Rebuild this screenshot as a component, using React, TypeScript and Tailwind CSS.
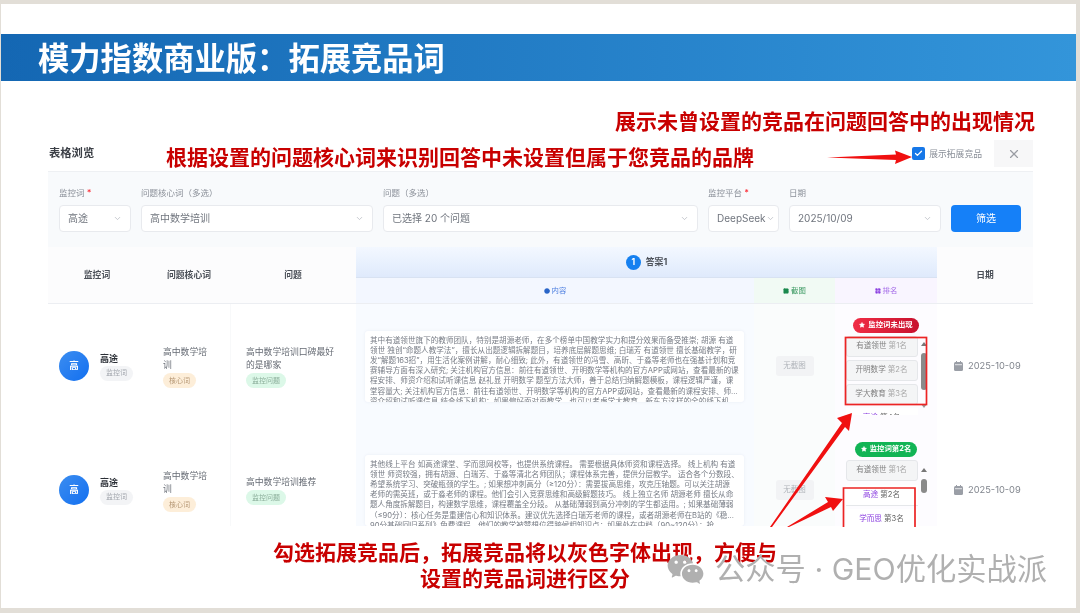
import { ChevronDown, X, Check, Star, CircleDot, Image, LayoutGrid } from "lucide-react";
import { RiWechatFill } from "react-icons/ri";

const box1 = [
  "其中有道领世旗下的教师团队，特别是胡源老师，在多个榜单中国教学实力和提分效果而备受推崇; 胡源 有道",
  "领世 独创“命题人教学法”，擅长从出题逻辑拆解题目，培养底层解题思维; 白瑞芳 有道领世 擅长基础教学，研",
  "发“解题163招”，用生活化案例讲解，耐心细致; 此外，有道领世的冯雪、高昕、于淼等老师也在强基计划和竞",
  "赛辅导方面有深入研究; 关注机构官方信息：前往有道领世、开明数学等机构的官方APP或网站，查看最新的课",
  "程安排、师资介绍和试听课信息 赵礼显 开明数学 题型方法大师，善于总结归纳解题模板，课程逻辑严谨，课",
  "堂容量大; 关注机构官方信息：前往有道领世、开明数学等机构的官方APP或网站，查看最新的课程安排、师...",
  "资介绍和试听课信息 结合线下机构：如果偏好面对面教学，也可以考虑学大教育、新东方这样的全的线下机",
];
const box2 = [
  "其他线上平台 如高途课堂、学而思网校等，也提供系统课程。 需要根据具体师资和课程选择。 线上机构 有道",
  "领世 师资较强，拥有胡源、白瑞芳、于淼等清北名师团队；课程体系完善，提供分层教学。 适合各个分数段、",
  "希望系统学习、突破瓶颈的学生。; 如果想冲刺高分（≥120分）：需要拔高思维，攻克压轴题。可以关注胡源",
  "老师的需英班，或于淼老师的课程。他们会引入竞赛思维和高级解题技巧。 线上独立名师 胡源老师 擅长从命",
  "题人角度拆解题目，构建数学思维，课程覆盖全分段。 从基础薄弱到高分冲刺的学生都适用。; 如果基础薄弱",
  "（≤90分）：核心任务是重建信心和知识体系。建议优先选择白瑞芳老师的课程，或者胡源老师在B站的《稳...",
  "90分基础回归系列》免费课程，他们的教学被赞想位得跨候相知识点；如果处在中档（90~120分）：抢",
];

function Sel({ w, text, label, req }: { w: string; text: string; label: string; req?: boolean }) {
  return (
    <div className={`flex flex-col gap-[6px] ${w}`}>
      <div className="text-[8.5px] leading-[12px] text-[#8a8f98] whitespace-nowrap">
        {label}
        {req && <span className="text-red-500"> *</span>}
      </div>
      <div className="h-[27px] flex items-center justify-between pl-2 pr-[8px] bg-white border border-[#e8eaee] rounded-[4px] text-[10px] text-[#70757e] whitespace-nowrap overflow-hidden">
        <span>{text}</span>
        <ChevronDown size={9} className="text-[#b5b9c0] shrink-0" />
      </div>
    </div>
  );
}

function Pill({ children, cls }: { children: React.ReactNode; cls: string }) {
  return <span className={`inline-flex items-center justify-center h-[15px] w-[33px] rounded-full text-[7px] ${cls}`}>{children}</span>;
}

function RankGrey({ name, rank }: { name: string; rank: string }) {
  return (
    <div className="h-[21px] shrink-0 flex items-center justify-center gap-[2px] bg-[#f4f5f6] border border-[#e5e7ea] rounded-[3px] text-[7.6px] text-[#808080]">
      <span>{name}</span>
      <span className="text-[#a8a8a8]">{rank}</span>
    </div>
  );
}
function RankWhite({ name, rank }: { name: string; rank: string }) {
  return (
    <div className="h-[21px] shrink-0 flex items-center justify-center gap-[2px] bg-white border-b border-[#e5e7ea] text-[7.6px] text-[#666]">
      <span className="text-[#8b3fe0]">{name}</span>
      <span>{rank}</span>
    </div>
  );
}

function Scroll({ arrowTop, thumbTop, thumbH, down }: { arrowTop: string; thumbTop: string; thumbH: string; down?: boolean }) {
  return (
    <div className="w-[6px] h-full flex flex-col items-center">
      <span className={`${arrowTop} w-0 h-0 border-x-[3px] border-x-transparent border-b-[4px] border-b-[#777]`} />
      <span className={`w-[6px] rounded-[3px] bg-[#8a8a8a] ${thumbTop} ${thumbH}`} />
      {down && <span className="mt-[14px] w-0 h-0 border-x-[3px] border-x-transparent border-t-[4px] border-t-[#999]" />}
    </div>
  );
}

function CalIcon() {
  return (
    <svg width="9" height="10" viewBox="0 0 9 10">
      <rect x="0" y="1" width="9" height="9" rx="1.5" fill="#9a9ea6" />
      <rect x="2" y="0" width="1" height="2" fill="#9a9ea6" />
      <rect x="6" y="0" width="1" height="2" fill="#9a9ea6" />
      <rect x="1" y="3.2" width="7" height="1" fill="#e4e5e8" />
    </svg>
  );
}

function Row({
  q,
  lines,
  pill,
  pillCls,
  list,
  scroll,
}: {
  q: string;
  lines: string[];
  pill: string;
  pillCls: string;
  list: React.ReactNode;
  scroll: React.ReactNode;
}) {
  return (
    <div className="grid grid-cols-[102px_80px_126px_398px_81px_102px_96px] h-[124px] shrink-0">
      <div className="flex items-center pl-[11px] gap-[11px]">
        <div className="w-[30px] h-[30px] rounded-full bg-gradient-to-br from-[#3b8df0] to-[#0f6ff0] flex items-center justify-center text-white text-[9.5px] font-bold">高</div>
        <div className="flex flex-col gap-[1px] items-start">
          <span className="text-[9px] leading-[13px] font-bold text-[#2b2f36]">高途</span>
          <Pill cls="bg-[#f3f4f6] text-[#a3a7ae]">监控词</Pill>
        </div>
      </div>
      <div className="flex flex-col justify-center items-start pl-[13px] pr-[15px] text-[8.8px] leading-[13px] text-[#666b74]">
        <div>高中数学培训</div>
        <div className="mt-[2px]"><Pill cls="bg-[#fdeed9] text-[#b89a78]">核心词</Pill></div>
      </div>
      <div className="flex flex-col justify-center items-start pl-[15px] pr-[15px] text-[8.8px] leading-[13px] text-[#666b74] border-l border-[#f8f9fa]">
        <div>{q}</div>
        <div className="mt-[2px]"><Pill cls="bg-[#dcf8e8] w-[40px] text-[#8cae9b]">监控问题</Pill></div>
      </div>
      <div className="bg-[#f8fbff] flex items-center pl-[9px] pr-[10px]">
        <div className="w-full h-[71px] bg-white rounded-[3px] pl-[5px] pr-[5px] pt-[5px] overflow-hidden text-[7.6px] leading-[10.2px] text-[#777c85] shadow-[0_0_3px_rgba(120,140,170,0.12)]">
          {lines.map((l, i) => (
            <div key={i} className="whitespace-nowrap overflow-hidden">{l}</div>
          ))}
        </div>
      </div>
      <div className="bg-[#fafcfc] flex items-center justify-center">
        <span className="w-[38px] h-[20px] bg-[#f2f3f5] rounded-[3px] flex items-center justify-center text-[7.5px] text-[#b0b4ba]">无截图</span>
      </div>
      <div className="bg-[#fdfcff] flex flex-col items-center justify-center gap-[3px]">
        <div className={`h-[15px] px-[6px] rounded-full flex items-center gap-[3px] text-white text-[7.4px] font-bold whitespace-nowrap ${pillCls}`}>
          <Star size={6} fill="white" />
          {pill}
        </div>
        <div className="h-[79px] flex gap-[3px] w-[81px] overflow-hidden">
          <div className="w-[72px] flex flex-col gap-[3px] overflow-hidden">{list}</div>
          {scroll}
        </div>
      </div>
      <div className="flex items-center pl-[17px] gap-[5px] text-[9.3px] text-[#80858d]">
        <CalIcon />
        2025-10-09
      </div>
    </div>
  );
}

export default function App() {
  return (
    <div className="w-[1080px] h-[613px] bg-[#e2ded7] pt-[4px] pb-[5px] pl-[1px] pr-[4px] overflow-hidden font-['Inter','Noto_Sans_CJK_SC',sans-serif]">
      <div className="relative w-full h-full bg-white overflow-hidden blur-[0.5px]">
        <div className="mt-[30px] h-[47px] bg-gradient-to-r from-[#1467b3] to-[#3395da] flex items-center pl-[37px] text-[31.3px] font-bold text-white whitespace-nowrap font-['Noto_Sans_CJK_SC',sans-serif]">
          模力指数商业版：拓展竞品词
        </div>

        <div className="ml-[47px] mt-[55px] w-[985px] h-[390px] overflow-hidden flex flex-col">
          <div className="h-[36px] shrink-0 flex items-start justify-between border-b border-[#eef0f3]">
            <span className="text-[11.3px] font-bold text-[#3b3f46] mt-[9px] ml-[1px]">表格浏览</span>
            <div className="flex items-center mt-[4px]">
              <span className="w-[13px] h-[13px] bg-[#1677e8] rounded-[2px] flex items-center justify-center mr-[4px]">
                <Check size={9} strokeWidth={3.5} className="text-white" />
              </span>
              <span className="text-[8.8px] text-[#8a8f98] mr-[12px]">展示拓展竞品</span>
              <span className="w-[39px] h-[27px] bg-[#f7f7f8] flex items-center justify-center">
                <X size={14} className="text-[#9a9da3]" />
              </span>
            </div>
          </div>

          <div className="h-[75px] shrink-0 bg-[#f8fafc] flex items-start gap-[10px] pl-[11px] pt-[15px]">
            <Sel w="w-[72px]" label="监控词" req text="高途" />
            <Sel w="w-[232px]" label="问题核心词（多选）" text="高中数学培训" />
            <Sel w="w-[315px]" label="问题（多选）" text="已选择 20 个问题" />
            <Sel w="w-[71px]" label="监控平台" req text="DeepSeek" />
            <Sel w="w-[152px]" label="日期" text="2025/10/09" />
            <div className="w-[70px] h-[27px] mt-[18px] bg-[#1580f8] rounded-[4px] flex items-center justify-center text-[10px] text-white">筛选</div>
          </div>

          <div className="grid grid-cols-[102px_80px_126px_398px_81px_102px_96px] grid-rows-[31px_25px] shrink-0 border-b border-[#eceef2] text-[8.8px] font-bold text-[#4b5058]">
            <div className="row-span-2 flex items-center justify-center pr-[4px] bg-[#fcfcfd]">监控词</div>
            <div className="row-span-2 flex items-center justify-center pr-[2px] bg-[#fcfcfd]">问题核心词</div>
            <div className="row-span-2 flex items-center justify-center bg-[#fcfcfd]">问题</div>
            <div className="col-span-3 flex items-center justify-center gap-[5px] bg-gradient-to-b from-[#f3f8ff] to-[#dfeafc] border-b border-[#d8e2f2]">
              <span className="w-[15px] h-[15px] rounded-full bg-[#1580f0] text-white flex items-center justify-center text-[8.5px]">1</span>
              答案1
            </div>
            <div className="row-span-2 flex items-center justify-center bg-[#fcfcfd]">日期</div>
            <div className="bg-[#f3f7ff] flex items-center justify-center gap-[2px] text-[7.4px] font-normal text-[#4d7fe0]">
              <CircleDot size={6} fill="#2a66c8" className="text-[#2a66c8]" />内容
            </div>
            <div className="bg-[#f1faf4] flex items-center justify-center gap-[2px] text-[7.4px] font-normal text-[#3d9a63]">
              <Image size={6} fill="#1c8a4f" className="text-[#1c8a4f]" />截图
            </div>
            <div className="bg-[#f9f5ff] flex items-center justify-center gap-[2px] text-[7.4px] font-normal text-[#a46be8]">
              <LayoutGrid size={6} fill="#8b3fe0" className="text-[#8b3fe0]" />排名
            </div>
          </div>

          <Row
            q="高中数学培训口碑最好的是哪家"
            lines={box1}
            pill="监控词未出现"
            pillCls="bg-gradient-to-r from-[#f02c45] to-[#c8102e]"
            list={
              <>
                <RankGrey name="有道领世" rank="第1名" />
                <RankGrey name="开明数学" rank="第2名" />
                <RankGrey name="学大教育" rank="第3名" />
                <RankWhite name="高途" rank="第4名" />
              </>
            }
            scroll={<Scroll arrowTop="mt-[6px]" thumbTop="mt-[7px]" thumbH="h-[37px]" down />}
          />
          <Row
            q="高中数学培训推荐"
            lines={box2}
            pill="监控词第2名"
            pillCls="bg-[#12b455]"
            list={
              <>
                <RankGrey name="有道领世" rank="第1名" />
                <div className="mt-[1px] flex flex-col gap-[3px]">
                  <RankWhite name="高途" rank="第2名" />
                  <RankWhite name="学而思" rank="第3名" />
                </div>
              </>
            }
            scroll={<Scroll arrowTop="mt-[8px]" thumbTop="mt-[7px]" thumbH="h-[14px]" />}
          />
        </div>

        <svg className="absolute inset-0 w-full h-full pointer-events-none" viewBox="1 4 1075 604">
          <rect x="845.5" y="337.5" width="81" height="67" fill="none" stroke="#ec2424" strokeWidth="1.7" />
          <path d="M843.5 527V488H915V527" fill="none" stroke="#ec2424" strokeWidth="1.7" />
          <polygon points="827,157.6 896,154.5 895,150.5 912,157 895,164 896,160" fill="#f01010" />
          <polygon points="770,527 842,423 837,418 852,413 849,431 845,427 772,527" fill="#f01010" />
          <polygon points="787,527 828,502 825,497 843,499 833,511 831,507 789,527" fill="#f01010" />
        </svg>

        <div className="absolute left-[165px] top-[142px] text-[21px] leading-[24px] font-bold text-[#c80000] whitespace-nowrap">根据设置的问题核心词来识别回答中未设置但属于您竞品的品牌</div>
        <div className="absolute left-[614px] top-[106px] text-[21px] leading-[24px] font-bold text-[#c80000] whitespace-nowrap">展示未曾设置的竞品在问题回答中的出现情况</div>
        <div className="absolute left-[272px] top-[536px] w-[504px] text-center text-[21px] leading-[26px] font-bold text-[#c80000]">勾选拓展竞品后，拓展竞品将以灰色字体出现，方便与<br />设置的竞品词进行区分</div>

        <div className="absolute left-[665px] top-[545px] flex items-center gap-[10px] text-[#b0b0b0] text-[30.3px] leading-[40px] whitespace-nowrap">
          <RiWechatFill size={39} />
          <span>公众号 · GEO优化实战派</span>
        </div>
      </div>
    </div>
  );
}
